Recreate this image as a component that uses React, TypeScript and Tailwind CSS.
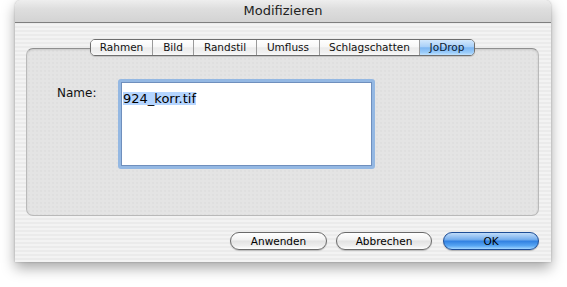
import React from "react";

const tabs = [
  { label: "Rahmen", w: "w-[61px]" },
  { label: "Bild", w: "w-[41px]" },
  { label: "Randstil", w: "w-[63px]" },
  { label: "Umfluss", w: "w-[63px]" },
  { label: "Schlagschatten", w: "w-[100px]" },
  { label: "JoDrop", w: "w-[55px]", active: true },
];

export default function App() {
  return (
    <div
      className="w-[567px] h-[287px] bg-white pl-[15px] overflow-hidden text-black"
      style={{ fontFamily: '"Lucida Grande", "DejaVu Sans", sans-serif' }}
    >
      <div className="w-[536px] h-[262px] rounded-t-[6px] flex flex-col shadow-[0_6px_14px_rgba(0,0,0,0.35),0_0_2px_rgba(0,0,0,0.25)] bg-[#efefef] bg-[image:repeating-linear-gradient(to_bottom,#f3f3f3_0px,#f3f3f3_2px,#ebebeb_2px,#ebebeb_4px)] overflow-hidden">
        {/* Title bar */}
        <div className="h-[23px] shrink-0 border-b border-[#7e7e7e] bg-[image:linear-gradient(to_bottom,#eeeeee_0%,#dedede_40%,#d3d3d3_100%)] flex items-center justify-center rounded-t-[6px]">
          <span className="text-[13px] leading-[22px] text-[#222]">Modifizieren</span>
        </div>

        {/* Body */}
        <div className="flex flex-col pt-[16px] pl-[11px] pr-[12px]">
          {/* Tabs */}
          <div className="relative z-10 -mb-[8px] flex justify-center">
            <div className="flex h-[17px] rounded-[5px] border border-[#6e6e6e] overflow-hidden shadow-[0_1px_1px_rgba(0,0,0,0.15)]">
              {tabs.map((t, i) => (
                <div
                  key={t.label}
                  className={
                    "flex items-center justify-center text-[10.5px] leading-[15px] " +
                    t.w +
                    " " +
                    (i > 0 ? "border-l border-[#9a9a9a] " : "") +
                    (t.active
                      ? "bg-[image:linear-gradient(to_bottom,#d3e8fd_0%,#a9d0f8_45%,#7db6f2_52%,#9ccdfa_85%,#c4e4ff_100%)] text-[#0a1a33]"
                      : "bg-[image:linear-gradient(to_bottom,#ffffff_0%,#f7f7f7_45%,#ebebeb_52%,#f1f1f1_85%,#fafafa_100%)] text-[#111]")
                  }
                >
                  {t.label}
                </div>
              ))}
            </div>
          </div>

          {/* Group box */}
          <div className="h-[168px] rounded-[7px] border border-[#b9b9b9] border-t-[#8f8f8f] bg-[#e4e4e4] bg-[image:radial-gradient(circle,#dadada_0.6px,transparent_0.8px)] bg-[size:4px_4px] shadow-[inset_0_1px_2px_rgba(0,0,0,0.12)] flex items-start pl-[30px] pt-[30px]">
            <div className="w-[61px] mt-[6px] text-[12px] leading-[16px] text-[#111]">Name:</div>
            <div className="w-[257px] h-[90px] rounded-[3px] border-[3px] border-[#94b8e3] bg-white">
              <div className="h-full w-full border border-[#6f8fbd] bg-white pl-[1px] pt-[3px]">
                <span className="inline-block h-[13px] bg-[#b5d5ff] text-[13px] leading-[13px] text-black">
                  924_korr.tif
                </span>
              </div>
            </div>
          </div>

          {/* Buttons */}
          <div className="mt-[16px] flex justify-end">
            <div className="w-[97px] h-[18px] rounded-full border border-[#6a6a6a] bg-[image:linear-gradient(to_bottom,#ffffff_0%,#f3f3f3_40%,#e3e3e3_52%,#eeeeee_80%,#ffffff_100%)] shadow-[0_1px_1px_rgba(0,0,0,0.2)] flex items-center justify-center text-[10.5px] leading-[16px]">
              Anwenden
            </div>
            <div className="ml-[9px] w-[96px] h-[18px] rounded-full border border-[#6a6a6a] bg-[image:linear-gradient(to_bottom,#ffffff_0%,#f3f3f3_40%,#e3e3e3_52%,#eeeeee_80%,#ffffff_100%)] shadow-[0_1px_1px_rgba(0,0,0,0.2)] flex items-center justify-center text-[10.5px] leading-[16px]">
              Abbrechen
            </div>
            <div className="ml-[11px] w-[96px] h-[18px] rounded-full border border-[#1d4d96] bg-[image:linear-gradient(to_bottom,#c0dcf9_0%,#77afee_40%,#3282e2_52%,#58a6f3_80%,#a3d6ff_100%)] shadow-[0_1px_1px_rgba(0,0,0,0.25)] flex items-center justify-center text-[10.5px] leading-[16px] text-black">
              OK
            </div>
          </div>
        </div>
      </div>
    </div>
  );
}
